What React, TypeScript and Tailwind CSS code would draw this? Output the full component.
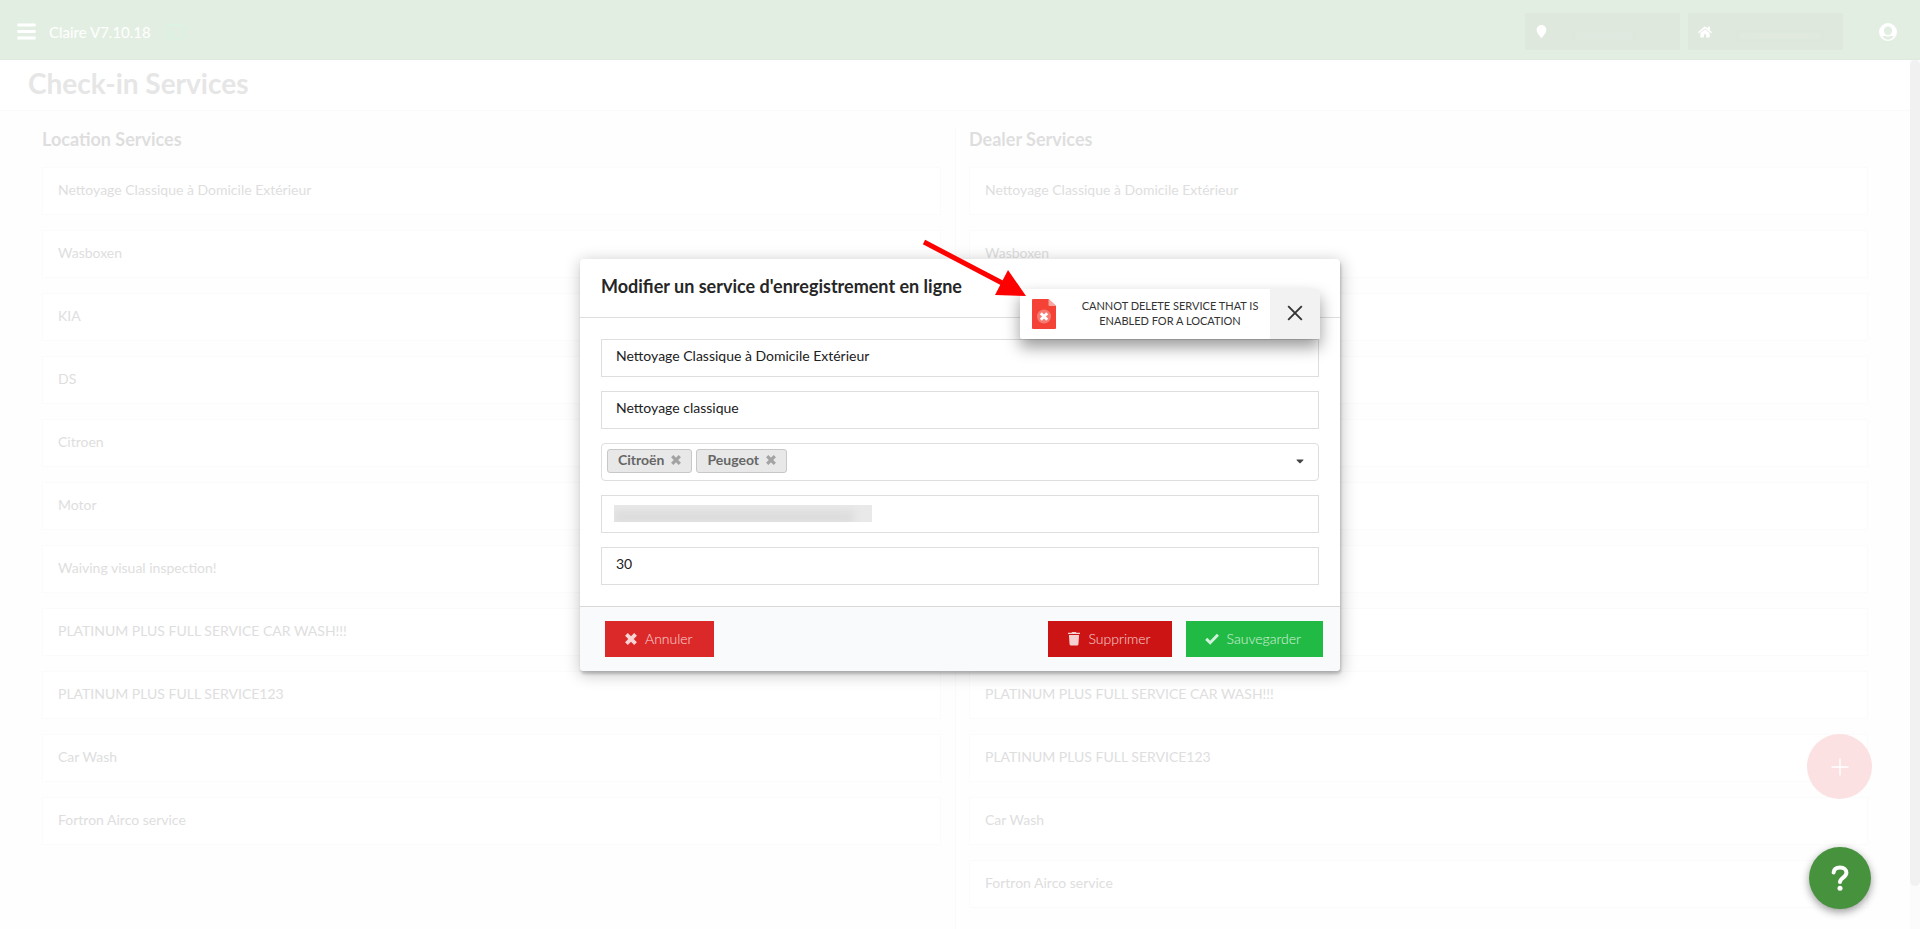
import React, { useState } from "react";
import { FaBars, FaCaretDown, FaHome, FaMapMarker } from "react-icons/fa";
import { MdOutlineCast } from "react-icons/md";

const locationServices = [
  "Nettoyage Classique à Domicile Extérieur",
  "Wasboxen",
  "KIA",
  "DS",
  "Citroen",
  "Motor",
  "Waiving visual inspection!",
  "PLATINUM PLUS FULL SERVICE CAR WASH!!!",
  "PLATINUM PLUS FULL SERVICE123",
  "Car Wash",
  "Fortron Airco service",
];

const dealerServices = [
  "Nettoyage Classique à Domicile Extérieur",
  "Wasboxen",
  "KIA",
  "DS",
  "Citroen",
  "Motor",
  "Waiving visual inspection!",
  "Waiving visual inspection!",
  "PLATINUM PLUS FULL SERVICE CAR WASH!!!",
  "PLATINUM PLUS FULL SERVICE123",
  "Car Wash",
  "Fortron Airco service",
];

function CrossIcon({ className }: { className: string }) {
  return (
    <svg viewBox="1 1 10 10" className={className} aria-hidden="true">
      <path
        d="M2.2 2.2 9.8 9.8M9.8 2.2 2.2 9.8"
        stroke="currentColor"
        strokeWidth="3.2"
        fill="none"
      />
    </svg>
  );
}

function TrashIcon({ className }: { className: string }) {
  return (
    <svg
      viewBox="0 0 13 15"
      className={className}
      fill="currentColor"
      aria-hidden="true"
    >
      <path d="M4.5.4h4l.6.8H13v1.5H0V1.2h3.9z" />
      <path d="M1 3.6h11l-.7 10.2a1.2 1.2 0 0 1-1.2 1.2H2.9a1.2 1.2 0 0 1-1.2-1.2z" />
    </svg>
  );
}

function CheckIcon({ className }: { className: string }) {
  return (
    <svg viewBox="0 0 14 12" className={className} aria-hidden="true">
      <path
        d="M1.2 5.9 5.2 9.7 12.9 1.7"
        stroke="currentColor"
        strokeWidth="2.9"
        fill="none"
      />
    </svg>
  );
}

function UserIcon({ className }: { className: string }) {
  return (
    <svg viewBox="0 0 18 18" className={className} aria-hidden="true">
      <path
        fill="currentColor"
        fillRule="evenodd"
        d="M9 0a9 9 0 1 1 0 18A9 9 0 0 1 9 0zM9 3.600a4.200 4.200 0 1 0 0 8.400 4.200 4.200 0 0 0 0-8.400zM3.400 13.600c1.300 2 3.300 3.200 5.600 3.200s4.300-1.200 5.600-3.200c-.6-.5-1.400-.8-2.200-.9-2.200 1.100-4.600 1.100-6.800 0-.8.100-1.600.4-2.200.9z"
      />
    </svg>
  );
}

function ServiceColumn({
  title,
  services,
}: {
  title: string;
  services: string[];
}) {
  return (
    <section className="flex-1 px-3.5">
      <h2 className="text-lg leading-6 font-bold text-[#dedede]">{title}</h2>
      <ul className="mt-4 flex flex-col gap-[15px]">
        {services.map((service, index) => (
          <li
            key={index}
            className="h-12 border border-[#fbfbfb] bg-white px-[15px] py-3 text-sm leading-5 text-[#dedede]"
          >
            {service}
          </li>
        ))}
      </ul>
    </section>
  );
}

function Toast({ onClose }: { onClose: () => void }) {
  return (
    <div
      role="alert"
      className="absolute top-[30px] right-5 flex h-[50px] w-[300px] items-stretch rounded-[2px] bg-white shadow-[0_8px_16px_rgba(0,0,0,0.4)]"
    >
      <div className="flex w-12 items-center justify-center">
        <svg viewBox="0 0 24 30" className="h-[30px] w-6" aria-hidden="true">
          <path
            d="M1 0h15.5L24 7v22a1 1 0 0 1-1 1H1a1 1 0 0 1-1-1V1a1 1 0 0 1 1-1z"
            fill="#f44336"
          />
          <path d="M16.5 0 24 7h-6.5a1 1 0 0 1-1-1z" fill="#f7a6a0" />
          <circle cx="12" cy="17.5" r="7" fill="#f77b72" />
          <path
            d="M8.8 14.3l6.4 6.4M15.2 14.3l-6.4 6.4"
            stroke="#fff"
            strokeWidth="2.8"
            fill="none"
          />
        </svg>
      </div>
      <p className="flex flex-1 items-center justify-center pr-[7px] pb-0.5 pl-[9px] text-center text-[11px] leading-[15px] text-[#333]">
        CANNOT DELETE SERVICE THAT IS
        <br />
        ENABLED FOR A LOCATION
      </p>
      <button
        type="button"
        aria-label="Close"
        onClick={onClose}
        className="flex w-[50px] items-center justify-center rounded-r-[2px] bg-[#f2f2f2] pb-0.5 text-[#333]"
      >
        <svg viewBox="0 0 16 16" className="size-4" aria-hidden="true">
          <path
            d="M1.2 1.2 14.8 14.8M14.8 1.2 1.2 14.8"
            stroke="currentColor"
            strokeWidth="1.9"
            fill="none"
          />
        </svg>
      </button>
    </div>
  );
}

function Tag({ label, onRemove }: { label: string; onRemove: () => void }) {
  return (
    <span className="flex h-6 items-center gap-[7px] rounded-[3px] border border-[#c8c8c8] bg-[#e8e8e8] px-2.5 pb-0.5 text-sm leading-5 font-bold text-[#666]">
      {label}
      <button type="button" aria-label={`Remove ${label}`} onClick={onRemove}>
        <CrossIcon className="size-2.5 text-[#a3a3a3]" />
      </button>
    </span>
  );
}

const inputClass =
  "h-[38px] w-full border border-[#dededf] bg-white px-3.5 pb-1 text-sm text-[#212121] outline-none";

export default function App() {
  const [tags, setTags] = useState(["Citroën", "Peugeot"]);
  const [toastOpen, setToastOpen] = useState(true);
  const [name, setName] = useState("Nettoyage Classique à Domicile Extérieur");
  const [description, setDescription] = useState("Nettoyage classique");
  const [duration, setDuration] = useState("30");

  return (
    <div className="relative flex h-screen flex-col overflow-hidden bg-[#fefefe] font-['Lato',sans-serif]">
      <header className="flex h-[60px] shrink-0 items-center justify-between border-b border-[#dfe9de] bg-[#e3eee2] pr-[23px] pl-4 text-white">
        <div className="flex items-center pt-1">
          <button type="button" aria-label="Menu">
            <FaBars className="size-[21px]" />
          </button>
          <span className="ml-3 text-[15px] leading-5">Claire V7.10.18</span>
          <MdOutlineCast className="ml-3.5 size-5 text-[#d9f3e3]" />
        </div>
        <div className="flex items-center gap-2 pt-1">
          <button
            type="button"
            aria-label="Location"
            className="flex h-[37px] w-[155px] items-center bg-[#dee8dd] px-2.5"
          >
            <FaMapMarker className="size-[13px]" />
            <span className="mt-2 ml-7 h-2 w-14 bg-[#e0e9df] blur-[2px]" />
          </button>
          <button
            type="button"
            aria-label="Dealer"
            className="flex h-[37px] w-[155px] items-center bg-[#dee8dd] px-2.5"
          >
            <FaHome className="size-3.5" />
            <span className="mt-2 ml-7 h-1 w-20 bg-[#e1eae0] blur-[2px]" />
          </button>
          <button type="button" aria-label="Account" className="ml-7">
            <UserIcon className="size-[18px]" />
          </button>
        </div>
      </header>

      <div className="flex min-h-0 flex-1">
        <main className="flex min-w-0 flex-1 flex-col">
          <div className="h-[51px] shrink-0 border-b border-[#fafafa] bg-white px-7 pt-[5px]">
            <h1 className="text-[28px] leading-9 font-bold text-[#e6e6e6]">
              Check-in Services
            </h1>
          </div>
          <div className="flex flex-1 px-7 pt-4">
            <ServiceColumn
              title="Location Services"
              services={locationServices}
            />
            <div className="-mr-px w-px bg-[#fafafa]" />
            <ServiceColumn title="Dealer Services" services={dealerServices} />
          </div>
        </main>
        <div className="w-2.5 bg-[#fbfbfb] pb-[43px]">
          <div className="h-full rounded-[5px] bg-[#f1f1f1]" />
        </div>
      </div>

      <button
        type="button"
        aria-label="Add service"
        className="absolute right-12 bottom-[130px] flex size-[65px] items-center justify-center rounded-full bg-[#fbe1e2] text-white"
      >
        <svg viewBox="0 0 18 18" className="size-[18px]" aria-hidden="true">
          <path d="M9 .5v17M.5 9h17" stroke="currentColor" strokeWidth="1.4" />
        </svg>
      </button>

      <button
        type="button"
        aria-label="Help"
        className="absolute right-[49px] bottom-5 flex size-[62px] items-center justify-center rounded-full bg-[#47923d] text-white shadow-[0_3px_8px_rgba(0,0,0,0.4)]"
      >
        <svg viewBox="0 0 18 26" className="h-[26px] w-[18px]" aria-hidden="true">
          <path
            d="M2.6 7.4C3 4 5.5 2.6 9 2.6c4 0 6.4 2.2 6.4 5.2 0 4.7-6.2 4.800-6.4 9.200"
            stroke="currentColor"
            strokeWidth="4"
            strokeLinecap="round"
            fill="none"
          />
          <circle cx="9" cy="23.2" r="2.5" fill="currentColor" />
        </svg>
      </button>

      <div className="absolute inset-0 flex items-center justify-center">
        <div
          role="dialog"
          aria-labelledby="dialog-title"
          className="relative w-[760px] rounded bg-white shadow-[1px_3px_3px_0_rgba(0,0,0,0.2),1px_3px_15px_2px_rgba(0,0,0,0.2)]"
        >
          <div className="border-b border-[#dededf] px-[21px] pt-[15px] pb-[19px]">
            <h2
              id="dialog-title"
              className="text-lg leading-6 font-bold text-[#262626]"
            >
              Modifier un service d'enregistrement en ligne
            </h2>
          </div>
          <form className="flex flex-col gap-3.5 p-[21px]">
            <input
              aria-label="Name"
              className={inputClass}
              value={name}
              onChange={(e) => setName(e.target.value)}
            />
            <input
              aria-label="Description"
              className={inputClass}
              value={description}
              onChange={(e) => setDescription(e.target.value)}
            />
            <div className="flex h-[38px] items-start justify-between rounded border border-[#dededf] py-[5px] pr-3 pl-[5px]">
              <div className="flex gap-1">
                {tags.map((tag) => (
                  <Tag
                    key={tag}
                    label={tag}
                    onRemove={() => setTags(tags.filter((t) => t !== tag))}
                  />
                ))}
              </div>
              <button type="button" aria-label="Show brands" className="pt-1.5">
                <FaCaretDown className="size-3 text-[#444]" />
              </button>
            </div>
            <div className="flex h-[38px] items-center border border-[#dededf] px-3">
              <div className="h-[17px] w-[258px] overflow-hidden bg-[#e9e9e9]">
                <div className="mt-1.5 h-3 w-60 bg-[#dbdbdb] blur-[4px]" />
              </div>
            </div>
            <input
              aria-label="Duration"
              className={inputClass}
              value={duration}
              onChange={(e) => setDuration(e.target.value)}
            />
          </form>
          <div className="flex items-center justify-between rounded-b border-t border-[#d8d8d8] bg-[#f9fafb] py-3.5 pr-[17px] pl-[25px] text-sm font-light text-white/80">
            <button
              type="button"
              className="flex h-9 items-center gap-2 bg-[#db2828] pr-[21px] pl-5"
            >
              <CrossIcon className="size-3" />
              Annuler
            </button>
            <div className="flex gap-3.5">
              <button
                type="button"
                className="flex h-9 items-center gap-2 bg-[#cc1414] pr-[21px] pl-5"
              >
                <TrashIcon className="h-[15px] w-3" />
                Supprimer
              </button>
              <button
                type="button"
                className="flex h-9 items-center gap-2 bg-[#21ba45] pr-[22px] pl-[19px]"
              >
                <CheckIcon className="h-3 w-3.5" />
                Sauvegarder
              </button>
            </div>
          </div>

          {toastOpen && <Toast onClose={() => setToastOpen(false)} />}

          <svg
            viewBox="0 0 106 58"
            className="pointer-events-none absolute -top-5 right-[312px] h-[58px] w-[106px]"
            aria-hidden="true"
          >
            <path d="M2 3 84 46" stroke="#f00" strokeWidth="5" />
            <path d="M104 57 86 31 73 56z" fill="#f00" />
          </svg>
        </div>
      </div>
    </div>
  );
}
